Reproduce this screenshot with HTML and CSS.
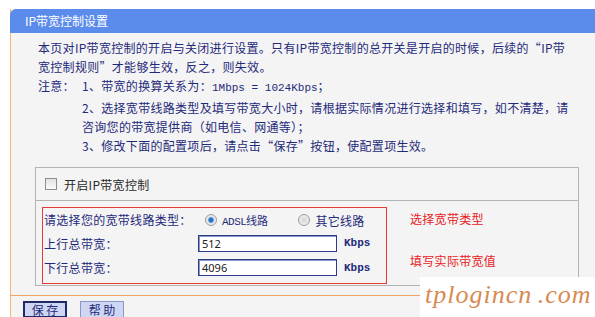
FILE: index.html
```html
<!DOCTYPE html>
<html lang="zh-CN">
<head>
    <meta charset="UTF-8">
    <title>IP带宽控制设置</title>
    <link rel="stylesheet" href="styles.css">
</head>
<body>

<div class="page">
    <div class="title-bar">IP带宽控制设置</div>

    <div class="panel">
        <p class="intro">本页对IP带宽控制的开启与关闭进行设置。只有IP带宽控制的总开关是开启的时候，后续的“IP带<br>宽控制规则”才能够生效，反之，则失效。</p>

        <div class="notes">
            <span class="notes-label">注意：</span>
            <div class="notes-list">
                <div>1、带宽的换算关系为：<span class="mono">1Mbps = 1024Kbps</span>；</div>
                <div>2、选择宽带线路类型及填写带宽大小时，请根据实际情况进行选择和填写，如不清楚，请</div>
                <div>咨询您的带宽提供商（如电信、网通等）；</div>
                <div>3、修改下面的配置项后，请点击“保存”按钮，使配置项生效。</div>
            </div>
        </div>

        <div class="settings">
            <div class="switch-row">
                <input type="checkbox" id="enableQos" class="check">
                <label for="enableQos">开启IP带宽控制</label>
            </div>
            <div class="line-section">
                <div class="red-box">
                    <div class="field-label">请选择您的宽带线路类型：</div>
                    <div class="radios">
                        <input type="radio" name="lineType" id="adsl" class="radio" checked>
                        <label for="adsl" class="adsl">ADSL线路</label>
                        <input type="radio" name="lineType" id="other" class="radio radio-other">
                        <label for="other">其它线路</label>
                    </div>

                    <div class="field-label">上行总带宽：</div>
                    <div class="field"><input type="text" class="bw-input" value="512"><span class="unit">Kbps</span></div>

                    <div class="field-label">下行总带宽：</div>
                    <div class="field"><input type="text" class="bw-input" value="4096"><span class="unit">Kbps</span></div>
                </div>
                <div class="hints">
                    <div class="hint hint-type">选择宽带类型</div>
                    <div class="hint hint-value">填写实际带宽值</div>
                </div>
            </div>
        </div>
    </div>

    <div class="buttons">
        <button class="btn btn-save">保 存</button>
        <button class="btn">帮 助</button>
    </div>
</div>

<div class="watermark">tplogincn .com</div>

</body>
</html>
```

FILE: styles.css
```css
body {
    margin: 0;
    background-color: #ffffff;
    font-family: "Noto Sans CJK SC", "Noto Sans", sans-serif;
    font-size: 12px;
    color: #1f2a7a;
    overflow: hidden;
}
.page {
    margin: 9px 0 0 10px;
    height: 320px;
    border-left: 1px solid #f2b878;
    background-color: #f4f4f4;
}
.title-bar {
    height: 24px;
    line-height: 23px;
    margin-left: -1px;
    padding-left: 15px;
    background-color: #5b8ceb;
    color: #ffffff;
    border-top-left-radius: 6px;
}
.panel {
    padding: 5px 0 9px 24px;
    border-bottom: 1px solid #eca562;
    letter-spacing: 0.3px;
}
.intro {
    margin: 0 0 0 3px;
    line-height: 19px;
    white-space: nowrap;
}
.notes {
    display: flex;
    margin-left: 3px;
    line-height: 19px;
    white-space: nowrap;
}
.notes-label {
    width: 44px;
}
.mono {
    font-family: "Liberation Mono", monospace;
    font-size: 11px;
    letter-spacing: 0;
}
.settings {
    width: 542px;
    margin-top: 12px;
    border: 1px solid #b4b4b4;
}
.switch-row {
    display: flex;
    align-items: center;
    height: 32px;
    padding-left: 9px;
    border-bottom: 1px solid #b4b4b4;
    color: #2a2a2a;
}
.check {
    appearance: none;
    width: 12px;
    height: 12px;
    margin: 0 7px 0 0;
    border: 1px solid #8e8e8e;
    background: linear-gradient(#e2e2e2, #fbfbfb);
}
.line-section {
    display: flex;
    padding: 6px 0 1px 6px;
}
.red-box {
    display: grid;
    grid-template-columns: 154px 188px;
    grid-template-rows: 23px 24px 25px;
    align-items: center;
    padding: 0 0 3px 1px;
    border: 1px solid #e63a3a;
}
.radios {
    display: flex;
    align-items: center;
    padding-top: 1px;
}
.radio {
    appearance: none;
    width: 12px;
    height: 12px;
    margin: 0 0 0 7px;
    border-radius: 50%;
    border: 1px solid #9a9a9a;
    background: radial-gradient(circle, #1e5fa8 0, #2f7ed0 2px, #dfe6ee 3.5px, #f4f4f4 6px);
}
.radio-other {
    margin-left: 31px;
    background: radial-gradient(circle, #d6d6d6 0, #f2f2f2 6px);
}
.radios label {
    margin-left: 5px;
}
.adsl {
    font-family: "Liberation Mono", monospace;
    font-size: 11px;
    letter-spacing: -0.5px;
}
.field {
    display: flex;
    align-items: center;
}
.bw-input {
    width: 134px;
    height: 13px;
    padding: 1px 0 1px 3px;
    border: 1px solid #2c3a8c;
    box-shadow: inset 1px 1px 0 #8c96c4;
    background-color: #ffffff;
    font-family: "Noto Sans", sans-serif;
    font-size: 11px;
    color: #222222;
}
.unit {
    margin-left: 7px;
    font-family: "Liberation Mono", monospace;
    font-size: 11px;
    font-weight: bold;
    letter-spacing: 0;
}
.hints {
    padding-left: 23px;
    color: #e8201e;
}
.hint-type {
    margin-top: 2px;
    line-height: 19px;
}
.hint-value {
    margin-top: 23px;
    line-height: 19px;
}
.buttons {
    display: flex;
    gap: 13px;
    padding: 5px 0 0 12px;
}
.btn {
    width: 44px;
    height: 17px;
    padding: 0;
    border: 1px solid #8a98c8;
    background-color: #cfd6f4;
    font-family: "Noto Sans CJK SC", sans-serif;
    font-size: 12px;
    line-height: 14px;
    color: #1f2a7a;
}
.btn-save {
    border: 2px solid #1f2a66;
}
.watermark {
    position: absolute;
    left: 420px;
    top: 277px;
    width: 175px;
    height: 40px;
    padding-left: 5px;
    background-color: #ffffff;
    font-family: "Liberation Serif", serif;
    font-style: italic;
    font-size: 26px;
    letter-spacing: 1px;
    word-spacing: -2px;
    line-height: 36px;
    color: #d88a52;
    white-space: nowrap;
    box-sizing: border-box;
}
```
